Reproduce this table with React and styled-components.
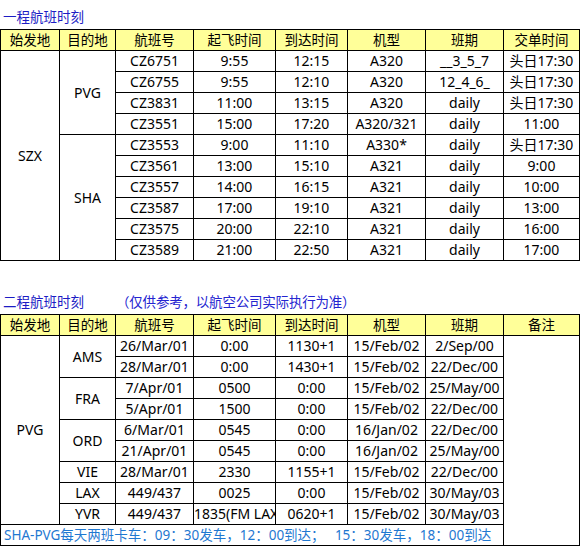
import React from "react";
import styled, { createGlobalStyle } from "styled-components";

const GlobalStyle = createGlobalStyle`
  body {
    margin: 0;
    background: #fff;
    font-family: "Noto Sans", "Noto Sans CJK SC", sans-serif;
    font-size: 13.5px;
    color: #000;
  }
`;

const Page = styled.div`
  width: 582px;
  display: flex;
  flex-direction: column;
`;

const Title = styled.div`
  padding: ${(p) => (p.$second ? "32px" : "8px")} 3px 2px;
  line-height: 19px;
  color: #1c1cc4;
  white-space: pre;
`;

const Note = styled.span`
  margin-left: 32px;
  color: #2424d0;
  letter-spacing: -0.2px;
`;

const Table = styled.table`
  width: 580px;
  border-collapse: collapse;
  table-layout: fixed;
`;

const Head = styled.th`
  background: #ffff99;
  font-weight: normal;
  border: 1px solid #000;
  height: 20px;
  padding: 0;
  line-height: 20px;
  text-align: center;
`;

const Cell = styled.td`
  border: 1px solid #000;
  height: 20px;
  padding: 0;
  line-height: 20px;
  font-size: 14px;
  text-align: ${(p) => (p.$clip ? "left" : "center")};
  white-space: nowrap;
  overflow: hidden;
`;

const FootCell = styled(Cell)`
  text-align: left;
  padding-left: 3px;
  font-size: 13.5px;
  color: #1f78d1;
`;

const widths = [59, 56, 78, 82, 72, 78, 78, 76];

const Cols = () => (
  <colgroup>
    {widths.map((w, i) => (
      <col key={i} style={{ width: w }} />
    ))}
  </colgroup>
);

const first = [
  ["CZ6751", "9:55", "12:15", "A320", "__3_5_7", "头日17:30"],
  ["CZ6755", "9:55", "12:10", "A320", "12_4_6_", "头日17:30"],
  ["CZ3831", "11:00", "13:15", "A320", "daily", "头日17:30"],
  ["CZ3551", "15:00", "17:20", "A320/321", "daily", "11:00"],
  ["CZ3553", "9:00", "11:10", "A330*", "daily", "头日17:30"],
  ["CZ3561", "13:00", "15:10", "A321", "daily", "9:00"],
  ["CZ3557", "14:00", "16:15", "A321", "daily", "10:00"],
  ["CZ3587", "17:00", "19:10", "A321", "daily", "13:00"],
  ["CZ3575", "20:00", "22:10", "A321", "daily", "16:00"],
  ["CZ3589", "21:00", "22:50", "A321", "daily", "17:00"],
];

const firstDest = { 0: ["PVG", 4], 4: ["SHA", 6] };

const second = [
  ["26/Mar/01", "0:00", "1130+1", "15/Feb/02", "2/Sep/00"],
  ["28/Mar/01", "0:00", "1430+1", "15/Feb/02", "22/Dec/00"],
  ["7/Apr/01", "0500", "0:00", "15/Feb/02", "25/May/00"],
  ["5/Apr/01", "1500", "0:00", "15/Feb/02", "22/Dec/00"],
  ["6/Mar/01", "0545", "0:00", "16/Jan/02", "22/Dec/00"],
  ["21/Apr/01", "0545", "0:00", "16/Jan/02", "25/May/00"],
  ["28/Mar/01", "2330", "1155+1", "15/Feb/02", "22/Dec/00"],
  ["449/437", "0025", "0:00", "15/Feb/02", "30/May/03"],
  ["449/437", "1835(FM LAX", "0620+1", "15/Feb/02", "30/May/03"],
];

const secondDest = {
  0: ["AMS", 2],
  2: ["FRA", 2],
  4: ["ORD", 2],
  6: ["VIE", 1],
  7: ["LAX", 1],
  8: ["YVR", 1],
};

const headers1 = ["始发地", "目的地", "航班号", "起飞时间", "到达时间", "机型", "班期", "交单时间"];
const headers2 = ["始发地", "目的地", "航班号", "起飞时间", "到达时间", "机型", "班期", "备注"];

const App = () => {
  return (
    <Page>
      <GlobalStyle />
      <Title>一程航班时刻</Title>
      <Table>
        <Cols />
        <thead>
          <tr>
            {headers1.map((h) => (
              <Head key={h}>{h}</Head>
            ))}
          </tr>
        </thead>
        <tbody>
          {first.map((row, i) => (
            <tr key={i}>
              {i === 0 && <Cell rowSpan={10}>SZX</Cell>}
              {firstDest[i] && (
                <Cell rowSpan={firstDest[i][1]}>{firstDest[i][0]}</Cell>
              )}
              {row.map((v, j) => (
                <Cell key={j}>{v}</Cell>
              ))}
            </tr>
          ))}
        </tbody>
      </Table>

      <Title $second>
        二程航班时刻
        <Note>（仅供参考，以航空公司实际执行为准）</Note>
      </Title>
      <Table>
        <Cols />
        <thead>
          <tr>
            {headers2.map((h) => (
              <Head key={h}>{h}</Head>
            ))}
          </tr>
        </thead>
        <tbody>
          {second.map((row, i) => (
            <tr key={i}>
              {i === 0 && <Cell rowSpan={9}>PVG</Cell>}
              {secondDest[i] && (
                <Cell rowSpan={secondDest[i][1]}>{secondDest[i][0]}</Cell>
              )}
              {row.map((v, j) => (
                <Cell key={j} $clip={v.length > 10}>
                  {v}
                </Cell>
              ))}
              {i === 0 && <Cell rowSpan={10} />}
            </tr>
          ))}
          <tr>
            <FootCell colSpan={7}>
              SHA-PVG每天两班卡车：09：30发车，12：00到达；　 15：30发车，18：00到达
            </FootCell>
          </tr>
        </tbody>
      </Table>
    </Page>
  );
};

export default App;
